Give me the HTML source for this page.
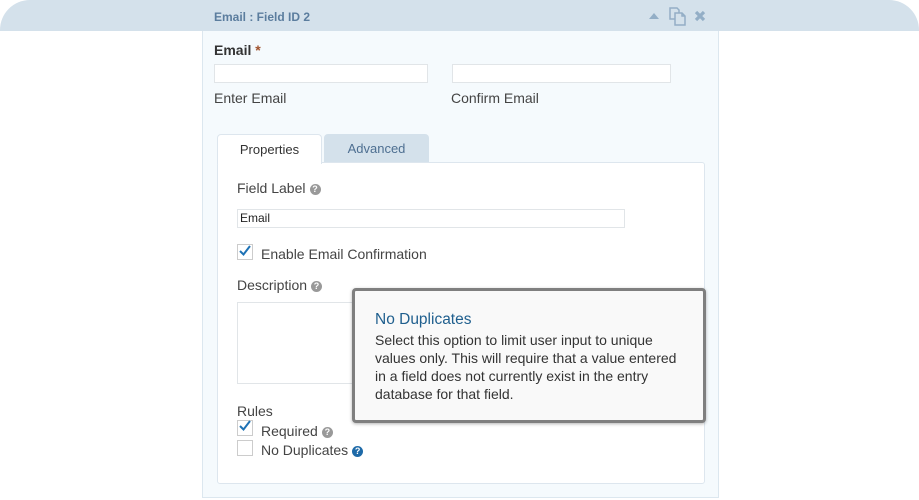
<!DOCTYPE html>
<html><head><meta charset="utf-8"><style>
*{box-sizing:border-box;margin:0;padding:0}
body{width:919px;height:500px;background:#fff;font-family:"Liberation Sans",sans-serif;position:relative;overflow:hidden;color:#333}
.bar{position:absolute;left:0;top:0;width:919px;height:31px;background:#d4e1eb;border-radius:30px 30px 0 0}
.panel{position:absolute;left:202px;top:31px;width:517px;height:467px;background:#f5fafd;border:1px solid #dce7ef;border-top:none}
.title{position:absolute;left:214px;top:10px;font-size:12px;font-weight:bold;color:#5b7d9e}
.abs{position:absolute}
.inp{position:absolute;height:19px;border:1px solid #e1e5e8;background:#fff}
.lbl{position:absolute;font-size:14px;color:#444}
.help{display:inline-block;width:11px;height:11px;border-radius:50%;background:#999;color:#fff;font-size:9px;line-height:11px;text-align:center;font-weight:bold;vertical-align:1px;margin-left:4px}
.cb{position:absolute;width:16px;height:16px;border:1px solid #ccc;background:#fff}
</style></head><body>
<div class="bar"></div>
<div class="panel"></div>
<div class="title">Email : Field ID 2</div>
<svg class="abs" style="left:649px;top:12px" width="10" height="7"><path d="M0 7L5 1L10 7Z" fill="#93aec6"/></svg>
<svg class="abs" style="left:668px;top:7px" width="20" height="19" fill="none" stroke="#93aec6" stroke-width="1.5"><path d="M2 1h7l2 2v9H2z"/><path d="M7 6h7l3 3v9H7z" fill="#d4e1eb"/><path d="M14 6v3h3"/></svg>
<svg class="abs" style="left:694px;top:10px" width="12" height="12"><path d="M2 2L10 10M10 2L2 10" stroke="#93aec6" stroke-width="3.2"/></svg>

<div class="lbl" style="left:214px;top:42px;font-weight:bold;color:#333;font-size:14px">Email <span style="color:#a0522d">*</span></div>
<div class="inp" style="left:214px;top:64px;width:214px"></div>
<div class="inp" style="left:452px;top:64px;width:219px"></div>
<div class="lbl" style="left:214px;top:90px">Enter Email</div>
<div class="lbl" style="left:451px;top:90px">Confirm Email</div>

<div class="abs" style="left:217px;top:162px;width:488px;height:322px;background:#fff;border:1px solid #dde6ee;border-radius:3px"></div>
<div class="abs" style="left:217px;top:134px;width:105px;height:30px;background:#fff;border:1px solid #dde6ee;border-bottom:none;border-radius:4px 4px 0 0;font-size:13px;color:#333;text-align:center;line-height:29px">Properties</div>
<div class="abs" style="left:324px;top:134px;width:105px;height:28px;background:#d4e1eb;border-radius:4px 4px 0 0;font-size:13px;color:#4e6f91;text-align:center;line-height:29px">Advanced</div>

<div class="lbl" style="left:237px;top:180px">Field Label<span class="help">?</span></div>
<div class="inp" style="left:237px;top:209px;width:388px;font-size:12px;line-height:17px;padding-left:2px;color:#222">Email</div>
<div class="cb" style="left:237px;top:244px"></div>
<svg class="abs" style="left:238px;top:244px" width="14" height="14"><path d="M2 7L5.5 10.5L12 2" fill="none" stroke="#1e72b5" stroke-width="2"/></svg>
<div class="lbl" style="left:261px;top:246px">Enable Email Confirmation</div>
<div class="lbl" style="left:237px;top:277px">Description<span class="help">?</span></div>
<div class="abs" style="left:237px;top:302px;width:140px;height:82px;border:1px solid #e1e5e8;background:#fff"></div>
<div class="lbl" style="left:237px;top:403px">Rules</div>
<div class="cb" style="left:237px;top:420px"></div>
<svg class="abs" style="left:238px;top:419px" width="14" height="14"><path d="M2 7L5.5 10.5L12 2" fill="none" stroke="#1e72b5" stroke-width="2"/></svg>
<div class="lbl" style="left:261px;top:423px">Required<span class="help">?</span></div>
<div class="cb" style="left:237px;top:440px"></div>
<div class="lbl" style="left:261px;top:442px">No Duplicates<span class="help" style="background:#1e6aa8">?</span></div>

<div class="abs" style="left:352px;top:288px;width:354px;height:135px;background:#f9f9f9;border:3px solid #7f7f7f;border-radius:4px;box-shadow:0 1px 3px rgba(0,0,0,.3);padding:20px 0 0 20px">
<div style="font-size:15.5px;color:#1f5f8e;margin-bottom:2px">No Duplicates</div>
<div style="font-size:14px;line-height:18px;color:#333;white-space:nowrap">Select this option to limit user input to unique<br>values only. This will require that a value entered<br>in a field does not currently exist in the entry<br>database for that field.</div>
</div>
</body></html>
